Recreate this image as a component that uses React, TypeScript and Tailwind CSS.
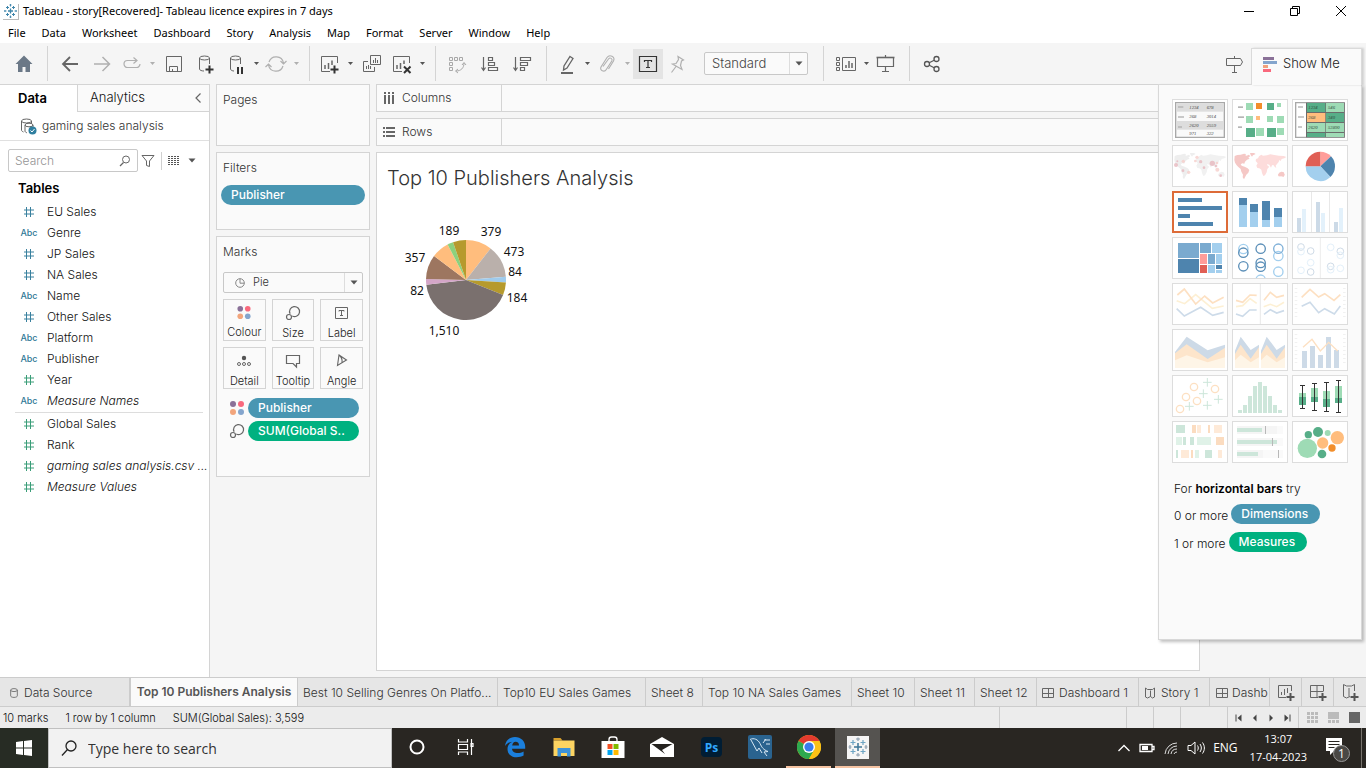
import type { ReactNode } from "react";

/* ---------- shared pieces ---------- */

function Icon({ children, size = 24, color = "#666666", box = "0 0 24 24" }: { children: ReactNode; size?: number; color?: string; box?: string }) {
  return (
    <svg width={size} height={size} viewBox={box} fill="none" stroke={color} aria-hidden="true" className="shrink-0">
      {children}
    </svg>
  );
}

function Tool({ label, wide, children }: { label: string; wide?: boolean; children: ReactNode }) {
  return (
    <button type="button" aria-label={label} className={wide ? "flex h-[30px] w-8 shrink-0 items-center justify-center" : "flex h-[30px] w-7 shrink-0 items-center justify-center"}>
      {children}
    </button>
  );
}

function Caret({ label, faint }: { label: string; faint?: boolean }) {
  return (
    <button type="button" aria-label={label} className="flex h-[30px] w-3 shrink-0 items-center justify-center">
      <svg width="5" height="3" viewBox="0 0 5 3" fill={faint ? "#b0b0b0" : "#555555"} aria-hidden="true">
        <path d="M0 0h5L2.5 3z" />
      </svg>
    </button>
  );
}

function Divider() {
  return <div className="h-[35px] w-px shrink-0 bg-[#d4d4d4]" />;
}

function DownArrow() {
  return (
    <svg width="8" height="5" viewBox="0 0 8 5" fill="#555555" aria-hidden="true">
      <path d="M0.5 0.5h7L4 4.5z" />
    </svg>
  );
}

const plus = <path d="M12.5 17.5h8M16.5 13.5v8" stroke="#333333" strokeWidth="2" />;

function TableauMark({ size }: { size: number }) {
  return (
    <svg width={size} height={size} viewBox="0 0 14 14" stroke="#3f86ab" fill="none" aria-hidden="true">
      <path d="M6.500 4.500v5M4 7h5" strokeWidth="1.300" />
      <path d="M3.500 2v3M2 3.500h3M9.500 2v3M8 3.500h3M3.500 9v3M2 10.500h3M9.500 9v3M8 10.500h3" />
      <path d="M6.500 0v2.500M5.500 1h2M6.500 11.500V14M5.500 13h2M1 6v2M0 7h2.500M12 6v2M10.500 7H13" strokeWidth="0.900" />
    </svg>
  );
}

/* ---------- window chrome ---------- */

const menus = ["File", "Data", "Worksheet", "Dashboard", "Story", "Analysis", "Map", "Format", "Server", "Window", "Help"];

function TitleBar() {
  return (
    <header className="shrink-0 bg-white font-['Noto_Sans','Open_Sans',sans-serif] text-[11px] font-normal text-black">
      <div className="flex h-[23px] items-center">
        <span className="ml-[3px] mr-1 flex h-4 w-4 items-center justify-center border-b border-r border-[#bbbbbb]">
          <TableauMark size={14} />
        </span>
        <h1 className="grow">Tableau - story[Recovered]- Tableau licence expires in 7 days</h1>
        <div className="mr-0.5 flex pb-0.5">
          <button type="button" aria-label="Minimise" className="flex h-5 w-[46px] items-center justify-center">
            <Icon size={12} box="0 0 12 12" color="#000000"><path d="M1 6.500h10" /></Icon>
          </button>
          <button type="button" aria-label="Restore" className="flex h-5 w-[46px] items-center justify-center">
            <Icon size={12} box="0 0 12 12" color="#000000"><path d="M1.500 3.500h7v7h-7zM3.500 3.500v-2h7v7h-2" /></Icon>
          </button>
          <button type="button" aria-label="Close" className="flex h-5 w-[46px] items-center justify-center">
            <Icon size={12} box="0 0 12 12" color="#000000"><path d="M1 1l10 10M11 1L1 11" /></Icon>
          </button>
        </div>
      </div>
      <nav className="flex h-5 items-center pt-px">
        {menus.map((m) => (
          <button key={m} type="button" className="px-2">{m}</button>
        ))}
      </nav>
    </header>
  );
}

function Toolbar() {
  return (
    <div className="flex h-[41px] shrink-0 items-center bg-[#f5f5f5]">
      <div className="flex w-[47px] justify-center">
        <Tool label="Start page">
          <Icon><path d="M12 3.500L3.500 12H6v8h4.500v-5h3v5H18v-8h2.500z" fill="#6b7887" stroke="none" /></Icon>
        </Tool>
      </div>
      <Divider />
      <div className="flex pl-1.5 pr-[7px]">
        <Tool label="Undo" wide><Icon><path d="M20 12H5M12 5l-7 7 7 7" strokeWidth="1.800" /></Icon></Tool>
        <Tool label="Redo" wide><Icon color="#b0b0b0"><path d="M4 12h15M12.500 5l7 7-7 7" strokeWidth="1.500" /></Icon></Tool>
        <Tool label="Replay"><Icon color="#b0b0b0"><path d="M17 8.500H7.500a3.500 3.500 0 0 0 0 7h9a3.500 3.500 0 0 0 3.500-3.500M13.500 5.500l3.500 3-3.500 3" strokeWidth="1.200" /></Icon></Tool>
        <Caret label="Replay options" faint />
        <Tool label="Save" wide><Icon><path d="M4.500 4.500h15v15h-15zM7.500 19.500v-5h8v5M10.500 17v2.500" /></Icon></Tool>
        <Tool label="New data source" wide>
          <Icon><ellipse cx="10.500" cy="6" rx="5" ry="2" /><path d="M5.500 6v11c0 1.200 2 2 4.500 2M15.500 6v6" /><path d="M11.500 17.500h8M15.500 13.500v8" stroke="#333333" strokeWidth="2" /></Icon>
        </Tool>
        <Tool label="Pause auto updates">
          <Icon><ellipse cx="11.500" cy="6" rx="5" ry="2" /><path d="M6.500 6v11c0 1.200 2 2 3.500 2M16.500 6v6" /><path d="M14 15v7M18 15v7" stroke="#333333" strokeWidth="2" /></Icon>
        </Tool>
        <Caret label="Auto update options" />
        <Tool label="Refresh"><Icon color="#b0b0b0"><path d="M5 10a7.500 7.500 0 0 1 14.500 1M19 14a7.500 7.500 0 0 1-14.500-1M16.500 9l3 3 3-3M1.500 15l3-3 3 3" strokeWidth="1.200" /></Icon></Tool>
        <Caret label="Refresh options" faint />
      </div>
      <Divider />
      <div className="flex pl-1.5 pr-[7px]">
        <Tool label="New worksheet"><Icon><path d="M19.500 11V4.500h-16v15H12" /><path d="M7 17v-4M10.500 17v-6M14 13V8.500" strokeWidth="1.500" />{plus}</Icon></Tool>
        <Caret label="New worksheet options" />
        <Tool label="Duplicate" wide><Icon><path d="M10.500 3.500h10v9h-10zM8 9.500H3.500v10h11V15" /><path d="M13.500 11V8M15.500 11V6M17.500 11V8M6.500 17v-3M8.500 17v-4M10.500 17v-3" /></Icon></Tool>
        <Tool label="Clear sheet"><Icon><path d="M19.500 11V4.500h-16v15H12" /><path d="M7 17v-4M10.500 17v-6M14 12V8.500" strokeWidth="1.500" /><path d="M14 14.500l6.500 6.500M20.500 14.500L14 21" stroke="#333333" strokeWidth="2" /></Icon></Tool>
        <Caret label="Clear sheet options" />
      </div>
      <Divider />
      <div className="flex pl-[5px] pr-[9px]">
        <Tool label="Swap rows and columns" wide>
          <Icon color="#a8a8a8"><path d="M4.500 5.500h3v3h-3zM9.500 5.500h3v3h-3zM14.500 5.500h3v3h-3zM4.500 10.500h3v3h-3zM4.500 15.500h3v3h-3z" /><path d="M19 11c0 5-3 8-8 8M17 13l2-2.500 2 2.500M13 17l-2.500 2 2.500 2" /></Icon>
        </Tool>
        <Tool label="Sort ascending" wide>
          <Icon><path d="M6.500 5v13M4.500 15.500l2 3 2-3M11.500 5.500h4v3h-4zM11.500 10.500h6v3h-6zM11.500 15.500h9v3h-9z" strokeWidth="1.200" /></Icon>
        </Tool>
        <Tool label="Sort descending" wide>
          <Icon><path d="M6.500 5v13M4.500 15.500l2 3 2-3M11.500 5.500h10v3h-10zM11.500 10.500h7v3h-7zM11.500 15.500h4v3h-4z" strokeWidth="1.200" /></Icon>
        </Tool>
      </div>
      <Divider />
      <div className="flex pl-1.5">
        <Tool label="Highlight"><Icon><path d="M15 4.500l3 2-6 9.500-3.500 2 .5-4z" strokeWidth="1.300" /><path d="M6 21h12" strokeWidth="2" /></Icon></Tool>
        <Caret label="Highlight options" />
        <Tool label="Group members"><Icon color="#b0b0b0"><path d="M8 14.500L13.500 7c1.500-2 4.500-.3 3.300 2l-5.500 8.500c-2 3.300-7 .8-5.300-2.500l6-9.500c2.500-3.500 8.500-1 6.500 3.500l-5 8" strokeWidth="1.100" /></Icon></Tool>
        <Caret label="Group options" faint />
        <button type="button" aria-label="Show mark labels" aria-pressed="true" className="flex h-[30px] w-[30px] items-center justify-center bg-[#e4e4e4]">
          <Icon color="#333333"><path d="M3.500 4.500h17v15h-17z" strokeWidth="1.200" /><path d="M8.500 10V8.500h7V10M12 8.500v7M10 15.500h4" strokeWidth="1.200" /></Icon>
        </button>
        <Tool label="Fix axes"><Icon color="#b0b0b0"><path d="M13 4.500l5.500 3.500-2 1-1 4.500 1.500 4-9.500-5.500 3.500-.5 2.500-4zM11 14.500l-4.500 6" strokeWidth="1.200" /></Icon></Tool>
      </div>
      <div className="relative ml-[13px] mr-[15px] shrink-0">
        <select aria-label="Fit" className="block h-[23px] w-[104px] appearance-none rounded-[2px] border border-[#c8c8c8] bg-[#fafafa] pl-[7px] text-[13px] text-[#444444]">
          <option>Standard</option>
          <option>Entire View</option>
        </select>
        <span className="pointer-events-none absolute inset-y-px right-px flex w-[18px] items-center justify-center border-l border-[#dddddd]"><DownArrow /></span>
      </div>
      <Divider />
      <div className="flex pl-2 pr-[9px]">
        <Tool label="Show or hide cards"><Icon><path d="M2.500 5.500h3v3h-3zM2.500 10.500h3v3h-3zM2.500 15.500h3v3h-3zM8.500 5.500h13v13h-13z" /><path d="M12 16v-3M15 16V9M18 16v-5" strokeWidth="1.500" /></Icon></Tool>
        <Caret label="Card options" />
        <Tool label="Presentation mode"><Icon><path d="M3.500 6v8.500h16V6M11.500 14.500v5M8 19.500h7M11.500 3v2" strokeWidth="1.200" /><path d="M2.500 5.500h18" strokeWidth="1.600" /></Icon></Tool>
      </div>
      <Divider />
      <div className="flex pl-2">
        <Tool label="Share"><Icon color="#555555"><circle cx="7" cy="12" r="2.500" strokeWidth="1.300" /><circle cx="16.500" cy="7" r="2.500" strokeWidth="1.300" /><circle cx="16.500" cy="17" r="2.500" strokeWidth="1.300" /><path d="M9.200 10.800l5-2.600M9.200 13.200l5 2.600" strokeWidth="1.200" /></Icon></Tool>
      </div>
      <div className="grow" />
      <Tool label="Show me guide" wide><Icon><path d="M4.500 6.500h14l2 3.500-2 3.500h-14zM12.500 4v2.500M12.500 13.500v7M10 20.500h5" /></Icon></Tool>
      <button type="button" aria-expanded="true" className="relative z-20 -mb-px ml-[1px] mr-1 flex h-[37px] w-[111px] shrink-0 items-center gap-1.5 self-end border-l border-r border-t border-[#dadada] bg-[#fafafa] pb-1.5 pl-[11px] text-[13px] text-[#222222] shadow-[2px_0_2px_rgba(0,0,0,0.15)]">
        <svg width="14" height="15" viewBox="0 0 14 15" aria-hidden="true">
          <path d="M0 0h11v3H0z" fill="#8a7198" /><path d="M0 4h14v3H0z" fill="#84a5cd" /><path d="M0 8h5v3H0z" fill="#f2a17c" /><path d="M0 12h8v3H0z" fill="#f9697d" />
        </svg>
        Show Me
      </button>
    </div>
  );
}

/* ---------- data pane ---------- */

type Field = { name: string; kind: "num" | "abc"; tone: "dim" | "mea"; calc?: boolean };

const dimensions: Field[] = [
  { name: "EU Sales", kind: "num", tone: "dim" },
  { name: "Genre", kind: "abc", tone: "dim" },
  { name: "JP Sales", kind: "num", tone: "dim" },
  { name: "NA Sales", kind: "num", tone: "dim" },
  { name: "Name", kind: "abc", tone: "dim" },
  { name: "Other Sales", kind: "num", tone: "dim" },
  { name: "Platform", kind: "abc", tone: "dim" },
  { name: "Publisher", kind: "abc", tone: "dim" },
  { name: "Year", kind: "num", tone: "mea" },
  { name: "Measure Names", kind: "abc", tone: "dim", calc: true },
];

const measures: Field[] = [
  { name: "Global Sales", kind: "num", tone: "mea" },
  { name: "Rank", kind: "num", tone: "mea" },
  { name: "gaming sales analysis.csv ...", kind: "num", tone: "mea", calc: true },
  { name: "Measure Values", kind: "num", tone: "mea", calc: true },
];

function FieldRow({ field }: { field: Field }) {
  return (
    <li className="flex h-[21px] items-center">
      <span className="flex w-[18px] shrink-0 justify-center">
        {field.kind === "num" ? (
          <svg width="12" height="12" viewBox="0 0 12 12" fill="none" stroke={field.tone === "dim" ? "#39809e" : "#3a9d78"} aria-hidden="true">
            <path d="M3.500 1v10M7.500 1v10M1 4h10M1 8h10" />
          </svg>
        ) : (
          <span className="pt-px text-[9px] font-medium text-[#2f7896]">Abc</span>
        )}
      </span>
      <span className={field.calc ? "ml-[9px] whitespace-nowrap italic" : "ml-[9px] whitespace-nowrap"}>{field.name}</span>
    </li>
  );
}

function DataPane() {
  return (
    <aside className="flex w-[210px] shrink-0 flex-col border-r border-t border-[#d4d4d4] bg-white text-[12px] text-[#111111]">
      <div className="flex h-[27px] shrink-0 text-[13px]">
        <button type="button" className="w-[77px] pr-3 text-center font-semibold text-black">Data</button>
        <button type="button" className="grow border-b border-l border-[#d4d4d4] bg-[#fafafa] pl-3 text-left">Analytics</button>
        <button type="button" aria-label="Collapse pane" className="flex w-[22px] items-center justify-center border-b border-[#d4d4d4] bg-[#fafafa]">
          <Icon size={12} box="0 0 12 12"><path d="M8.500 1.500L4 6l4.500 4.500" strokeWidth="1.200" /></Icon>
        </button>
      </div>
      <div className="flex h-[29px] shrink-0 items-center border-b border-[#e0e0e0] pl-5 text-[#333333]">
        <Icon size={17} box="0 0 17 17">
          <ellipse cx="6.500" cy="3" rx="5" ry="2" /><path d="M1.500 3v9c0 1 .8 1.500 2 2M11.500 3v2" />
          <ellipse cx="9" cy="7" rx="4" ry="1.800" /><path d="M5 7v6c0 1 1 1.500 2 1.800M13 7v2" />
          <circle cx="12.500" cy="12.500" r="4" fill="#2f7fa0" stroke="none" /><path d="M10.500 12.500l1.500 1.500 2.500-3" stroke="#ffffff" />
        </Icon>
        <span className="ml-[5px]">gaming sales analysis</span>
      </div>
      <div className="mt-2 flex items-center pl-2">
        <div className="flex h-[23px] w-[130px] items-center rounded-[2px] border border-[#c8c8c8] pl-1.5 pr-1.5">
          <input aria-label="Search fields" placeholder="Search" className="w-full min-w-0 bg-transparent placeholder:text-[#949494] focus:outline-none" />
          <Icon size={12} box="0 0 12 12"><circle cx="7" cy="4.500" r="3.500" /><path d="M4.500 7.500L1 11" strokeWidth="1.200" /></Icon>
        </div>
        <button type="button" aria-label="Filter fields" className="ml-[3px] flex w-[14px] justify-center">
          <Icon size={14} box="0 0 14 14"><path d="M1 1.500h12L8.500 7v5.500l-3-1V7z" /></Icon>
        </button>
        <div className="ml-1.5 h-[18px] w-px bg-[#d0d0d0]" />
        <button type="button" aria-label="View as list" className="ml-1.5 flex items-center gap-2">
          <Icon size={12} box="0 0 12 12"><path d="M0 1.500h12M0 3.500h12M0 5.500h12M0 7.500h12M0 9.500h12" stroke="#555555" strokeDasharray="2 1" /></Icon>
          <DownArrow />
        </button>
      </div>
      <h2 className="ml-[18px] mt-1.5 h-5 text-[13px] font-semibold leading-5 text-black">Tables</h2>
      <ul className="mt-[3px] pl-5">
        {dimensions.map((f) => <FieldRow key={f.name} field={f} />)}
      </ul>
      <div className="ml-[15px] mr-1.5 mt-px h-px shrink-0 bg-[#dddddd]" />
      <ul className="pl-5">
        {measures.map((f) => <FieldRow key={f.name} field={f} />)}
      </ul>
    </aside>
  );
}

/* ---------- cards ---------- */

function ColourDots() {
  return (
    <svg width="16" height="16" viewBox="0 0 16 16" aria-hidden="true">
      <circle cx="4" cy="4" r="3" fill="#8a7198" /><circle cx="12" cy="4" r="3" fill="#f9697d" />
      <circle cx="4" cy="12" r="3" fill="#f2a57c" /><circle cx="12" cy="12" r="3" fill="#84a5cd" />
    </svg>
  );
}

function SizeGlyph() {
  return (
    <Icon size={16} box="0 0 16 16">
      <path d="M5.100 8.800A5 5 0 1 1 7.300 11" strokeWidth="1.200" /><circle cx="4" cy="12" r="2.500" strokeWidth="1.200" />
    </Icon>
  );
}

const markButtons: { label: string; icon: ReactNode }[] = [
  { label: "Colour", icon: <ColourDots /> },
  { label: "Size", icon: <SizeGlyph /> },
  { label: "Label", icon: <Icon size={16} box="0 0 16 16"><path d="M1.500 2.500h12v11h-12z" /><path d="M5 6.500V5.500h5v1M7.500 5.500v5M6 10.500h3" /></Icon> },
  { label: "Detail", icon: <Icon size={16} box="0 0 16 16"><circle cx="8" cy="5" r="2.200" fill="#555555" stroke="none" /><circle cx="3" cy="11" r="1.500" /><circle cx="8" cy="11" r="1.500" /><circle cx="13" cy="11" r="1.500" /></Icon> },
  { label: "Tooltip", icon: <Icon size={16} box="0 0 16 16"><path d="M1.500 2.500h13v8h-3v3.500l-3.500-3.500H1.500z" strokeWidth="1.200" /></Icon> },
  { label: "Angle", icon: <Icon size={16} box="0 0 16 16"><path d="M5 2l7.500 5L3.500 12.500zM5 2c2.500 2 3.500 4.500 3 7.500" strokeWidth="1.100" /></Icon> },
];

function Pill({ children, green }: { children: ReactNode; green?: boolean }) {
  return (
    <div className={green ? "h-5 grow rounded-full bg-[#00b180] pl-[10px] text-[12px] font-medium leading-5 text-white" : "h-5 grow rounded-full bg-[#4996b2] pl-[10px] text-[12px] font-medium leading-5 text-white"}>
      {children}
    </div>
  );
}

function Cards() {
  return (
    <div className="ml-1.5 flex w-[154px] shrink-0 flex-col gap-1.5 text-[12px] text-[#333333]">
      <section className="h-[62px] shrink-0 border border-[#d4d4d4] bg-[#fafafa] px-1.5 pt-1.5">
        <h2 className="leading-[18px]">Pages</h2>
      </section>
      <section className="h-[78px] shrink-0 border border-[#d4d4d4] bg-[#fafafa] px-1.5 pt-1.5">
        <h2 className="leading-[18px]">Filters</h2>
        <div className="-mx-0.5 mt-2 flex"><Pill>Publisher</Pill></div>
      </section>
      <section className="h-[241px] shrink-0 border border-[#d4d4d4] bg-[#fafafa] px-1.5 pt-1.5">
        <h2 className="leading-[18px]">Marks</h2>
        <div className="relative mt-[11px]">
          <select aria-label="Mark type" className="block h-[21px] w-full appearance-none rounded-[2px] border border-[#c8c8c8] bg-[#fafafa] pl-[29px] text-[11px]">
            <option>Pie</option>
            <option>Bar</option>
          </select>
          <span className="pointer-events-none absolute inset-y-0 left-3 flex items-center">
            <Icon size={10} box="0 0 10 10" color="#888888"><circle cx="5" cy="5" r="4.300" /><path d="M5 .7v4.500h4.300" /></Icon>
          </span>
          <span className="pointer-events-none absolute inset-y-px right-px flex w-[18px] items-center justify-center border-l border-[#dddddd]"><DownArrow /></span>
        </div>
        <div className="mt-1.5 grid grid-cols-3 gap-1.5">
          {markButtons.map((b) => (
            <button key={b.label} type="button" className="flex h-[42px] flex-col items-center border border-[#d4d4d4] bg-[#fafafa] pt-[5px] text-[11px] leading-4 text-[#222222]">
              {b.icon}
              <span className="mt-1">{b.label}</span>
            </button>
          ))}
        </div>
        <div className="mt-[9px] flex items-center gap-[3px] pl-1.5 pr-1"><ColourDots /><Pill>Publisher</Pill></div>
        <div className="mt-[3px] flex items-center gap-[3px] pl-1.5 pr-1"><SizeGlyph /><Pill green>SUM(Global S..</Pill></div>
      </section>
    </div>
  );
}

/* ---------- worksheet ---------- */

const slices = [
  { v: 379, c: "#ffbd7d" }, { v: 473, c: "#bab0ab" }, { v: 84, c: "#9fcbec" }, { v: 184, c: "#b69a2d" }, { v: 1510, c: "#7a706e" },
  { v: 82, c: "#d4a6c8" }, { v: 357, c: "#9d7660" }, { v: 256, c: "#ffbd7d" }, { v: 85, c: "#8cd17d" }, { v: 189, c: "#b69a2d" },
];

const pieLabels = [
  { t: "189", x: 449, y: 235 }, { t: "379", x: 491, y: 236 }, { t: "473", x: 514, y: 256 }, { t: "84", x: 515, y: 276 },
  { t: "184", x: 517, y: 302 }, { t: "357", x: 415, y: 262 }, { t: "82", x: 417, y: 295 }, { t: "1,510", x: 444, y: 335 },
];

function wedge(cx: number, cy: number, r: number, from: number, to: number) {
  const p = (a: number) => `${(cx + r * Math.sin(a * 2 * Math.PI)).toFixed(2)} ${(cy - r * Math.cos(a * 2 * Math.PI)).toFixed(2)}`;
  return `M${cx} ${cy}L${p(from)}A${r} ${r} 0 ${to - from > 0.5 ? 1 : 0} 1 ${p(to)}Z`;
}

function PieChart() {
  const total = slices.reduce((s, d) => s + d.v, 0);
  let acc = 0;
  return (
    <svg width="160" height="140" viewBox="386 210 160 140" role="img" aria-label="Global sales by publisher" className="mt-[18px]">
      {slices.map((s, i) => {
        const from = acc / total;
        acc += s.v;
        return <path key={i} d={wedge(466, 280, 40, from, acc / total)} fill={s.c} />;
      })}
      {pieLabels.map((l) => (
        <text key={l.t} x={l.x} y={l.y} textAnchor="middle" className="fill-[#111111] font-['Noto_Sans','Open_Sans',sans-serif] text-[12px] font-normal">{l.t}</text>
      ))}
    </svg>
  );
}

function Shelf({ name, icon }: { name: string; icon: ReactNode }) {
  return (
    <div className="flex h-7 shrink-0 border border-[#d4d4d4] bg-[#fafafa] text-[12px] text-[#333333]">
      <div className="flex w-[125px] items-center gap-[7px] border-r border-[#d4d4d4] pl-1.5">
        {icon}
        {name}
      </div>
    </div>
  );
}

function Sheet() {
  return (
    <main className="ml-1.5 mr-[166px] flex min-w-0 grow flex-col gap-1.5 pb-1.5">
      <Shelf name="Columns" icon={<svg width="12" height="12" viewBox="0 0 12 12" fill="#666666" aria-hidden="true"><path d="M1 0h2v2H1zM5 0h2v2H5zM9 0h2v2H9zM1 3h2v9H1zM5 3h2v9H5zM9 3h2v9H9z" /></svg>} />
      <Shelf name="Rows" icon={<svg width="12" height="12" viewBox="0 0 12 12" fill="#666666" aria-hidden="true"><path d="M0 1h2v2H0zM0 5h2v2H0zM0 9h2v2H0zM3 1h9v2H3zM3 5h9v2H3zM3 9h9v2H3z" /></svg>} />
      <section className="grow border border-[#d4d4d4] bg-white pl-[9px] pt-[11px]">
        <h2 className="h-7 pl-px text-[20px] leading-7 text-[#333333]">Top 10 Publishers Analysis</h2>
        <PieChart />
      </section>
    </main>
  );
}

/* ---------- Show Me ---------- */

function Rects({ list, fill }: { list: number[][]; fill: string }) {
  return <g fill={fill}>{list.map(([x, y, w, h], i) => <rect key={i} x={x} y={y} width={w} height={h} />)}</g>;
}

function Rings({ list, r, stroke, width = 3 }: { list: number[][]; r: number; stroke: string; width?: number }) {
  return <g fill="none" stroke={stroke} strokeWidth={width}>{list.map(([x, y], i) => <circle key={i} cx={x} cy={y} r={r} />)}</g>;
}

function Balls({ list, fill }: { list: number[][]; fill: string }) {
  return <g fill={fill}>{list.map(([x, y, r], i) => <circle key={i} cx={x} cy={y} r={r} />)}</g>;
}

const landAmerica = "M74 228l8-3 10-1 10-3 6 1-2 4 4 1 6-3 5 4-6 5 4 3-8 3-6 6-2 6-6-1-5 3 3 4 4 2 5 1 9 5 5 5-3 8-6 6-4 8-3 6-4-6 1-8-5-9-2-8-7-6-5-5-5-8-2-8zM120 219l12 0 5 3-8 4-3 4-4-5z";
const landRest = "M137 243l1-6 6-2 3-6 7-5 5 3 12-1 10-3 12 2 14 2 14 1 8 3-6 4-8 2-3 6-4-3-2 6-5 6-4 5 2 6-4-1-5-7-4 1-3 7-5-9-7-2 2 5 5 3-6 7-2 10-5 9-5 2-4-9-2-10-6-4-6-1-3-7 4-7zM204 284l4-6 7-3 6 2 3 7-3 6-6-1-9 0z";

const numeric = "font-['Liberation_Serif',serif] text-[14px] font-normal italic";

type Thumb = { name: string; box: string; art: ReactNode; on?: boolean };

const thumbs: Thumb[] = [
  { name: "Text table", box: "66 57 168 126", art: <>
    <path d="M77 68h146v104H77z" fill="#f9f9f9" stroke="#a8a8a8" strokeWidth="4" /><Rects fill="#dddddd" list={[[79, 70, 142, 25], [79, 123, 142, 26]]} /><Rects fill="#b0b0b0" list={[[84, 79, 16, 4], [84, 109, 18, 4], [84, 139, 12, 4]]} />
    <g fill="#444444" className={numeric}><text x="118" y="87">1234</text><text x="170" y="87">678</text><text x="118" y="115">368</text><text x="170" y="115">3014</text><text x="118" y="141">2620</text><text x="170" y="141">2559</text><text x="118" y="165">971</text><text x="170" y="165">322</text></g></> },
  { name: "Heat map", box: "246 57 168 126", art: <>
    <Rects fill="#b5b5b5" list={[[264, 79, 15, 5], [264, 109, 18, 5], [264, 139, 12, 5]]} /><Rects fill="#9edbb5" list={[[288, 69, 21, 21], [381, 69, 12, 12], [288, 108, 21, 21], [351, 108, 18, 18], [381, 108, 21, 21], [318, 144, 24, 24], [381, 144, 21, 21]]} />
    <Rects fill="#57ae88" list={[[351, 69, 21, 21], [288, 144, 27, 27], [351, 144, 27, 27]]} /><Rects fill="#f28e2b" list={[[318, 69, 18, 18]]} /><Rects fill="#ffbd7d" list={[[318, 108, 12, 12]]} /></> },
  { name: "Highlight table", box: "426 57 168 126", art: <>
    <path d="M437 68h146v104H437z" fill="#ffffff" stroke="#a8a8a8" strokeWidth="4" /><Rects fill="#6b6b6b" list={[[468, 68, 116, 104]]} /><Rects fill="#57ae88" list={[[471, 69, 55, 27], [528, 99, 54, 27], [471, 159, 55, 12]]} /><Rects fill="#9edbb5" list={[[528, 69, 54, 27], [471, 129, 55, 27], [528, 129, 54, 27], [528, 159, 54, 12]]} /><Rects fill="#ffbd7d" list={[[471, 99, 55, 27]]} /><Rects fill="#b0b0b0" list={[[444, 79, 15, 4], [444, 109, 18, 4], [444, 139, 12, 4]]} />
    <g fill="#2f4a3b" className={numeric}><text x="475" y="87">1234</text><text x="534" y="87">546</text><text x="475" y="118">368</text><text x="534" y="118">340</text><text x="475" y="147">2620</text><text x="534" y="147">53890</text></g></> },
  { name: "Symbol map", box: "66 195 168 126", art: <><path d={landAmerica} fill="#eeeeee" /><path d={landRest} fill="#f1f1f1" /><g opacity="0.8"><Balls fill="#e8b8bf" list={[[78, 255, 6], [187, 250, 8], [152, 245, 5], [99, 272, 4], [162, 263, 4], [212, 287, 4], [82, 244, 3], [198, 258, 4]]} /><Balls fill="#f7cfcb" list={[[100, 244, 5], [141, 232, 5], [136, 243, 4], [116, 277, 5], [202, 269, 6], [201, 249, 4]]} /></g></> },
  { name: "Filled map", box: "246 195 168 126", art: <g transform="translate(180 0)"><path d={landAmerica} fill="#f5c8c6" /><path d={landRest} fill="#fddcdb" /><path d="M204 284l4-6 7-3 6 2 3 7-3 6-6-1-9 0z" fill="#f5c8c6" /></g> },
  { name: "Pie chart", box: "426 195 168 126", art: <><path d={wedge(511, 259, 44, 0, 0.13)} fill="#ff9d9a" /><path d={wedge(511, 259, 44, 0.13, 0.38)} fill="#4e84ae" /><path d={wedge(511, 259, 44, 0.38, 0.75)} fill="#a3cfee" /><path d={wedge(511, 259, 44, 0.75, 1)} fill="#e05f55" /></> },
  { name: "Horizontal bars", box: "66 333 168 126", on: true, art: <Rects fill="#4e84ae" list={[[84, 354, 72, 12], [84, 378, 132, 12], [84, 402, 36, 12], [84, 426, 105, 12]]} /> },
  { name: "Stacked bars", box: "246 333 168 126", art: <><Rects fill="#4e84ae" list={[[267, 354, 24, 21], [300, 372, 24, 24], [336, 363, 24, 57], [372, 384, 24, 27]]} /><Rects fill="#a3cfee" list={[[267, 375, 24, 66], [300, 396, 24, 45], [336, 420, 24, 21], [372, 411, 24, 30]]} /></> },
  { name: "Side-by-side bars", box: "426 333 168 126", art: <><Rects fill="#e8e8e8" list={[[483, 336, 3, 120], [537, 336, 3, 120]]} /><Rects fill="#ccdae7" list={[[441, 414, 12, 42], [498, 366, 12, 90], [552, 426, 12, 30]]} /><Rects fill="#e3f1fb" list={[[456, 387, 12, 69], [513, 399, 12, 57], [567, 384, 12, 72]]} /></> },
  { name: "Treemap", box: "66 471 168 126", art: <>
    <Rects fill="#7aaacf" list={[[84, 489, 63, 45], [150, 489, 33, 30], [174, 522, 21, 30]]} /><Rects fill="#4e84ae" list={[[84, 537, 63, 42], [198, 555, 18, 12]]} />
    <Rects fill="#a3cfee" list={[[186, 489, 30, 30], [198, 522, 18, 30], [174, 555, 21, 24], [198, 570, 18, 9]]} /><Rects fill="#ff9d9a" list={[[150, 522, 21, 30]]} /><Rects fill="#e05f55" list={[[150, 555, 21, 24]]} /></> },
  { name: "Circle views", box: "246 471 168 126", art: <><Rings r={14} width={4} stroke="#a3cfee" list={[[280, 507], [385, 528], [385, 575], [332, 599]]} /><Rings r={14} width={4} stroke="#5b8fb8" list={[[280, 518], [280, 559], [332, 506], [332, 549], [332, 560]]} /><Rings r={14} width={4} stroke="#7fb0d8" list={[[385, 506]]} /></> },
  { name: "Side-by-side circles", box: "426 471 168 126", art: <><path d="M511 474v120" stroke="#ececec" strokeWidth="3" /><Rings r={10} stroke="#cfdbe7" list={[[453, 501], [482, 513], [482, 576], [571, 514], [542, 559]]} /><Rings r={10} stroke="#e3f0fa" list={[[453, 515], [482, 548], [453, 571], [542, 502], [571, 526], [571, 565], [542, 569]]} /></> },
  { name: "Continuous lines", box: "66 9 168 126", art: <g fill="none" strokeWidth="5"><path d="M80 62l24 9 33-27 50 41 34-7" stroke="#fdf0d4" /><path d="M82 45l21-18 34 45 27-24 24 21 33-17" stroke="#fde0c2" /><path d="M80 86l23 22 49-26 36 24 33-9" stroke="#cddbe9" /></g> },
  { name: "Discrete lines", box: "246 9 168 126", art: <><path d="M331 12v120" stroke="#e8e8e8" strokeWidth="3" /><g fill="none" strokeWidth="5"><path d="M258 80l20-3 22-21 20 14M341 80l20-7 19 7 22-13" stroke="#fdf0d4" /><path d="M258 61l20 6 22-22 20 1M342 61l19-24 19 15 22-6" stroke="#fde0c2" /><path d="M258 102l20 7 21-19h21M342 103l19-14 19 10 22-7" stroke="#cddbe9" /></g></> },
  { name: "Dual lines", box: "426 9 168 126", art: <><path d="M438 25v92M583 25v92" stroke="#ededed" strokeWidth="8" strokeDasharray="2 10" /><g fill="none" strokeWidth="5"><path d="M455 52l25-24 26 23 18-10 28 20 19-17" stroke="#fde0c2" /><path d="M455 79l25-12 26 31 18-12 29 16 18-24" stroke="#cddbe9" /></g></> },
  { name: "Continuous area", box: "66 147 168 126", art: <><path d="M75 216l35-46 63 41 52-17v70H75z" fill="#cddae7" /><path d="M75 220l35-27 63 44 52-34v61H75z" fill="#fde5cb" /><path d="M75 241l35-15 63 21 52-15v32H75z" fill="#fef5e7" /></> },
  { name: "Discrete area", box: "246 147 168 126", art: <>{[0, 78].map((d) => <g key={d} transform={`translate(${d} 0)`}><path d="M255 212l17-42 30 40 25-16v70h-72z" fill="#cddae7" /><path d="M255 222l17-28 30 42 25-34v62h-72z" fill="#fde5cb" /><path d="M255 241l17-17 30 23 25-15v32h-72z" fill="#fef5e7" /></g>)}</> },
  { name: "Dual combination", box: "426 147 168 126", art: <><path d="M438 163v92M583 163v92" stroke="#ededed" strokeWidth="8" strokeDasharray="2 10" /><Rects fill="#cddae7" list={[[456, 213, 15, 51], [480, 198, 15, 66], [504, 225, 15, 39], [528, 171, 15, 93], [552, 210, 15, 54]]} /><path d="M459 202l27-24 25 35 25-26 27 26" fill="none" stroke="#fde0c2" strokeWidth="4" /></> },
  { name: "Scatter plot", box: "66 285 168 126", art: <><Rings r={11} width={4} stroke="#fde0c2" list={[[132, 321], [195, 327], [108, 351], [141, 363], [90, 387]]} /><g stroke="#cde6da" strokeWidth="3">{[[172, 307], [160, 341], [205, 358], [118, 379], [172, 376]].map(([x, y]) => <path key={x * 1000 + y} d={`M${x - 13} ${y}h26M${x} ${y - 13}v26`} />)}</g></> },
  { name: "Histogram", box: "246 285 168 126", art: <Rects fill="#cde6da" list={[[264, 390, 12, 9], [279, 375, 12, 24], [294, 348, 12, 51], [309, 318, 12, 81], [324, 306, 12, 93], [339, 318, 12, 81], [354, 348, 12, 51], [369, 375, 12, 24], [384, 390, 12, 9]]} /> },
  { name: "Box-and-whisker plot", box: "426 285 168 126", art: <><Rects fill="#9edbb5" list={[[447, 339, 21, 12], [483, 324, 21, 27], [519, 333, 21, 24], [555, 318, 21, 36]]} /><Rects fill="#57ae88" list={[[447, 351, 21, 24], [483, 351, 21, 15], [519, 357, 21, 24], [555, 354, 21, 15]]} /><path d="M457.500 316v69M450 316.500h15M450 385.500h15M493.500 310v81M486 310.500h15M486 391.500h15M529.500 307v87M522 307.500h15M522 394.500h15M565.500 301v96M558 301.500h15M558 397.500h15" stroke="#333333" strokeWidth="3" /></> },
  { name: "Gantt chart", box: "66 423 168 126", art: <><Rects fill="#cde6da" list={[[78, 435, 27, 24], [99, 471, 9, 24], [120, 471, 12, 24], [78, 510, 6, 24], [165, 510, 21, 24]]} /><Rects fill="#e0f2e8" list={[[78, 471, 18, 24], [141, 471, 42, 24], [135, 510, 12, 24]]} /><Rects fill="#fbdcc0" list={[[126, 435, 12, 24], [174, 435, 6, 24], [198, 471, 24, 24], [123, 510, 6, 24]]} /><Rects fill="#feead8" list={[[141, 435, 12, 24], [192, 435, 24, 24], [93, 510, 24, 24], [204, 510, 12, 24]]} /></> },
  { name: "Bullet graph", box: "246 423 168 126", art: <><Rects fill="#f5f5f5" list={[[261, 438, 120, 24], [261, 474, 105, 24], [261, 510, 78, 24]]} /><Rects fill="#fafafa" list={[[381, 438, 18, 24], [366, 474, 33, 24], [339, 510, 60, 24]]} /><Rects fill="#cde6da" list={[[261, 444, 75, 12], [261, 480, 120, 12], [261, 516, 63, 12]]} /><Rects fill="#b8b8b8" list={[[345, 438, 3, 24], [366, 474, 3, 24], [384, 510, 3, 24]]} /></> },
  { name: "Packed bubbles", box: "426 423 168 126", art: <><Balls fill="#9edbb5" list={[[472, 505, 29], [533, 459, 9]]} /><Balls fill="#57ae88" list={[[475, 464, 11], [504, 456, 15], [516, 522, 13]]} /><Balls fill="#ffbd7d" list={[[518, 489, 17], [562, 473, 20]]} /><Balls fill="#f28e2b" list={[[546, 504, 11]]} /></> },
];

function ShowMe() {
  return (
    <aside className="absolute right-1 top-0 z-10 h-[556px] w-[204px] border border-[#d8d8d8] bg-[#fafafa] pl-[13px] pt-[14px] text-[12px] text-[#111111] shadow-[2px_2px_3px_rgba(0,0,0,0.25)]">
      <div className="grid w-44 grid-cols-3 gap-1">
        {thumbs.map((t) => (
          <button key={t.name} type="button" aria-label={t.name} className={t.on ? "h-[42px] overflow-hidden bg-white outline-2 -outline-offset-2 outline-[#dd6b38]" : "h-[42px] overflow-hidden bg-white outline-1 -outline-offset-1 outline-[#dddddd]"}>
            <svg width="56" height="42" viewBox={t.box} className="block" aria-hidden="true">{t.art}</svg>
          </button>
        ))}
      </div>
      <div className="pl-0.5">
        <p className="mt-4 leading-5">For <b className="font-semibold text-black">horizontal bars</b> try</p>
        <div className="mt-[5px] flex h-5 items-center gap-[3px]">
          <span className="pt-1">0 or more</span>
          <span className="h-5 rounded-full bg-[#4996b2] pl-[10px] pr-3 font-medium leading-5 text-white">Dimensions</span>
        </div>
        <div className="mt-2 flex h-5 items-center gap-[3px]">
          <span className="pt-1">1 or more</span>
          <span className="h-5 rounded-full bg-[#00b180] pl-[10px] pr-3 font-medium leading-5 text-white">Measures</span>
        </div>
      </div>
    </aside>
  );
}

/* ---------- tabs and status ---------- */

const dashIcon = <Icon size={12} box="0 0 12 12"><path d="M.5 1.500h11v9H.5zM6.500 1.500v9M.5 6.500h11" /></Icon>;
const storyIcon = <Icon size={12} box="0 0 12 12"><path d="M1.500 1l2 1.500h5l2-1.500v9l-2 1-2-1.500-3 1.500-2-1zM6.500 3.500v6" /></Icon>;

const tabs: { name: string; w: string; icon?: ReactNode }[] = [
  { name: "Best 10 Selling Genres On Platfo...", w: "w-[200px]" },
  { name: "Top10 EU Sales Games", w: "w-[148px]" },
  { name: "Sheet 8", w: "w-[57px]" },
  { name: "Top 10 NA Sales Games", w: "w-[149px]" },
  { name: "Sheet 10", w: "w-[63px]" },
  { name: "Sheet 11", w: "w-[60px]" },
  { name: "Sheet 12", w: "w-[62px]" },
  { name: "Dashboard 1", w: "w-[102px]", icon: dashIcon },
  { name: "Story 1", w: "w-[71px]", icon: storyIcon },
];

function SheetTabs() {
  return (
    <nav className="flex h-[30px] shrink-0 border-b border-t border-[#cccccc] bg-[#e6e6e6] text-[12px] text-[#333333]">
      <button type="button" className="flex w-[131px] shrink-0 items-center gap-[5px] border-r-2 border-[#cccccc] pl-[9px] pt-px">
        <Icon size={10} box="0 0 10 12"><ellipse cx="5" cy="2.500" rx="4" ry="1.800" /><path d="M1 2.500v7c0 1 1.800 1.800 4 1.800s4-.8 4-1.800v-7" /></Icon>
        Data Source
      </button>
      <button type="button" aria-current="page" className="w-[167px] shrink-0 whitespace-nowrap border-r border-[#cccccc] bg-[#fafafa] font-semibold text-[#555555]">Top 10 Publishers Analysis</button>
      {tabs.map((t) => (
        <button key={t.name} type="button" className={`flex shrink-0 items-center gap-[5px] whitespace-nowrap border-r border-[#cccccc] pl-[5px] pt-px ${t.w}`}>
          {t.icon}
          {t.name}
        </button>
      ))}
      <button type="button" className="flex w-0 grow items-center gap-1 whitespace-nowrap border-r border-[#cccccc] pl-1.5 pt-px">{dashIcon}Dashb</button>
      <button type="button" aria-label="New worksheet" className="flex w-8 shrink-0 items-center justify-center border-r border-[#cccccc]">
        <Icon size={18} box="3 3 18 18"><path d="M17.500 11V5.500h-13v12H12" /><path d="M7.500 15v-3M10.500 15V9M13.500 13V8" /><path d="M12.500 17h8M16.500 13v8" stroke="#555555" strokeWidth="2" /></Icon>
      </button>
      <button type="button" aria-label="New dashboard" className="flex w-8 shrink-0 items-center justify-center border-r border-[#cccccc]">
        <Icon size={18} box="3 3 18 18"><path d="M17.500 11V5.500h-13v12H12M11 5.500v12M4.500 11.500h13" /><path d="M12.500 17h8M16.500 13v8" stroke="#555555" strokeWidth="2" /></Icon>
      </button>
      <button type="button" aria-label="New story" className="flex w-8 shrink-0 items-center justify-center">
        <Icon size={18} box="3 3 18 18"><path d="M16.500 11V4.500l-3 1.500h-5l-3-1.500v12l3 1.500 3.500-1.500M11 8v8.500" /><path d="M12.500 17h8M16.500 13v8" stroke="#555555" strokeWidth="2" /></Icon>
      </button>
    </nav>
  );
}

const pager = [
  { name: "First sheet", d: "M2.500 2.500h1v7h-1zM8.500 2.500v7L4.500 6z" },
  { name: "Previous sheet", d: "M7.500 2.500v7L4 6z" },
  { name: "Next sheet", d: "M4.500 2.500v7L8 6z" },
  { name: "Last sheet", d: "M8.500 2.500h1v7h-1zM3.500 2.500v7L7.500 6z" },
];

function StatusBar() {
  return (
    <footer className="flex h-[21px] shrink-0 items-center bg-[#ececec] text-[11px] text-[#111111]">
      <span className="ml-[3px] pt-px">10 marks</span>
      <span className="ml-[17px] pt-px">1 row by 1 column</span>
      <span className="ml-[17px] grow pt-px">SUM(Global Sales): 3,599</span>
      <div className="h-full w-[127px] border-l border-[#cccccc]" />
      <div className="h-full w-[27px] border-l border-[#cccccc]" />
      <div className="h-full w-[27px] border-l border-[#cccccc]" />
      <div className="h-full w-[47px] border-l border-[#cccccc]" />
      <div className="flex h-full w-[71px] items-center justify-center gap-1 border-l border-[#cccccc]">
        {pager.map((p) => (
          <button key={p.name} type="button" aria-label={p.name}>
            <svg width="12" height="12" viewBox="0 0 12 12" fill="#444444" aria-hidden="true"><path d={p.d} /></svg>
          </button>
        ))}
      </div>
      <div className="flex h-full w-[68px] items-center justify-center gap-[9px] border-l border-[#cccccc] pl-0.5">
        <svg width="12" height="12" viewBox="0 0 12 12" fill="#bbbbbb" aria-hidden="true"><path d="M0 0h3v3H0zM4 0h3v3H4zM8 0h3v3H8zM0 4h3v3H0zM4 4h3v3H4zM8 4h3v3H8zM0 8h3v3H0zM4 8h3v3H4zM8 8h3v3H8z" /></svg>
        <svg width="12" height="12" viewBox="0 0 12 12" fill="#bbbbbb" aria-hidden="true"><path d="M0 0h11v7H0zM0 8h3v3H0zM4 8h3v3H4zM8 8h3v3H8z" /></svg>
        <svg width="12" height="12" viewBox="0 0 12 12" fill="#666666" aria-hidden="true"><path d="M0 0h11v11H0z" /></svg>
      </div>
    </footer>
  );
}

/* ---------- taskbar ---------- */

const apps: { name: string; art: ReactNode; cls?: string }[] = [
  { name: "Cortana", art: <circle cx="12" cy="12" r="6.500" fill="none" stroke="#ffffff" strokeWidth="2" /> },
  { name: "Task view", art: <path d="M4.500 4v3h9V4M4.500 20v-3h9v3M4.500 9.500h9v5h-9zM17.500 4v16M17 8.500h2v3h-2z" fill="none" stroke="#ffffff" strokeWidth="1.200" /> },
  { name: "Edge", art: <path d="M2 11C2.500 5.500 6.500 2 12 2c6 0 10.200 4.300 10.200 9.800v2H9c.3 3 2.800 4.300 5.500 4.300 2.300 0 4.300-.6 6.100-1.700v4.200c-2 1.200-4.300 1.700-7 1.700C8 22.300 4.500 19 4.500 14c0-3.400 1.800-5.900 5-7.300C6 7 3.700 8.500 2 11zM9.200 10.500H16c0-2.500-1.200-3.700-3.300-3.700-2 0-3.200 1.500-3.500 3.700z" fill="#1b7fdc" /> },
  { name: "File Explorer", art: <><path d="M1.500 3h7l2 2.500H1.500z" fill="#d9a02c" /><path d="M1.500 5.500h21V21h-21z" fill="#fcd462" /><path d="M5.500 13h13v8.500H15V18H9v3.500H5.500z" fill="#3d93d9" /></> },
  { name: "Microsoft Store", art: <><path d="M8 6V4.500A2.500 2.500 0 0 1 10.500 2h3A2.500 2.500 0 0 1 16 4.500V6" fill="none" stroke="#ffffff" strokeWidth="1.300" /><path d="M.5 6h23v17H.5z" fill="#ffffff" /><path d="M6.500 9h5v5h-5z" fill="#f25022" /><path d="M12.500 9h5v5h-5z" fill="#7fba00" /><path d="M6.500 15h5v5h-5z" fill="#00a4ef" /><path d="M12.500 15h5v5h-5z" fill="#ffb900" /></> },
  { name: "Mail", art: <><path d="M0 9l12-7 12 7v13H0z" fill="#ffffff" /><path d="M1.500 9h21L12 15l3 4z" fill="#24221f" /></> },
  { name: "Photoshop", art: <><rect x="2" y="2" width="21" height="20" rx="4" fill="#001d34" /><text x="12.500" y="16.500" textAnchor="middle" fill="#31a8ff" className="font-['Open_Sans',sans-serif] text-[12px] font-bold">Ps</text></> },
  { name: "MySQL Workbench", art: <><rect x="0" y="0" width="24" height="24" rx="2" fill="#2a638f" /><path d="M2 4.500c4-2 8 0 10 4s3 6 8 8l-4 .5 3 4M3 5l6 11 2-3 3 5" fill="none" stroke="#d7e7f3" strokeWidth="1" /><path d="M16 5h6M18 9h4M15 8l3-4" stroke="#d7e7f3" /></> },
  { name: "Chrome", cls: "border-[#f5c3a2]", art: <><circle cx="12" cy="12" r="12" fill="#fbc116" /><path d="M12 12L1.600 6A12 12 0 0 1 22.400 6z" fill="#e33b2e" /><path d="M12 12L1.600 6A12 12 0 0 0 12 24l5.200-9z" fill="#2da94f" /><path d="M12 6h10.400A12 12 0 0 1 12 24l5.200-9z" fill="#fbc116" /><circle cx="12" cy="12" r="6" fill="#ffffff" /><circle cx="12" cy="12" r="4.600" fill="#3a7cec" /></> },
  { name: "Tableau", cls: "border-[#f5c3a2] bg-[#555350]", art: <><rect x="1" y="1" width="22" height="23" fill="#f5f5f5" /><g fill="none" strokeWidth="1.200"><path d="M12 8v8M8 12h8" stroke="#3c7597" strokeWidth="1.500" /><path d="M7 5v5M4.500 7.500h5M17 5v5M14.500 7.500h5M7 14v5M4.500 16.500h5M17 14v5M14.500 16.500h5" stroke="#6ea5c4" /><path d="M12 2.500v3.500M10 4h4M12 18v3.500M10 20h4M4 10v4M2.500 12h3M20 10v4M18.500 12h3" stroke="#8d9fb0" /></g></> },
];

function Taskbar() {
  return (
    <footer className="flex h-10 shrink-0 items-stretch bg-[#292622] font-['Open_Sans','Noto_Sans',sans-serif] text-[12px] font-normal text-white">
      <button type="button" aria-label="Start" className="flex w-12 shrink-0 items-center justify-center bg-[#272c24]">
        <svg width="16" height="16" viewBox="0 0 16 16" fill="#ffffff" aria-hidden="true"><path d="M0 2l7-1v6.500H0zM8 1l8-1v7.500H8zM0 8.500h7V15l-7-1zM8 8.500h8V16l-8-1z" /></svg>
      </button>
      <label className="flex w-[344px] shrink-0 items-center gap-[11px] border border-[#c0c0c0] bg-[#f2f2f2] pl-3 text-[14px]">
        <Icon size={16} box="0 0 16 16" color="#222222"><circle cx="10" cy="6" r="5" strokeWidth="1.300" /><path d="M6.500 9.500L1 15.500" strokeWidth="1.300" /></Icon>
        <input aria-label="Type here to search" placeholder="Type here to search" className="min-w-0 grow bg-transparent placeholder:text-[#333333] focus:outline-none" />
      </label>
      <div className="flex gap-1 pl-0.5">
        {apps.map((a) => (
          <button key={a.name} type="button" aria-label={a.name} className={`flex w-[45px] shrink-0 items-center justify-center border-b-2 ${a.cls ?? "border-transparent"}`}>
            <svg width="24" height="24" viewBox="0 0 24 24" aria-hidden="true">{a.art}</svg>
          </button>
        ))}
      </div>
      <div className="grow" />
      <div className="flex items-center gap-2">
        <Icon size={14} box="0 0 14 14" color="#ffffff"><path d="M1.500 10L7 4.500l5.500 5.500" strokeWidth="1.300" /></Icon>
        <Icon size={16} box="0 0 16 16" color="#ffffff"><path d="M1 4.500h12v7H1zM13.500 6.500h1.500v3h-1.500" strokeWidth="1.300" /><path d="M3 6h6v4H3z" fill="#ffffff" stroke="none" /></Icon>
        <Icon size={16} box="0 0 16 16" color="#dddddd"><path d="M2 14A12 12 0 0 1 14 3M5 14a9 9 0 0 1 9-8M8 14a6 6 0 0 1 6-5M11 14a3 3 0 0 1 3-2" /></Icon>
        <Icon size={18} box="0 0 18 18" color="#ffffff"><path d="M1 6.500h3l4-3.500v12l-4-3.500H1zM10.500 6.500c1 1.500 1 3.500 0 5M13 5c1.800 2.500 1.800 5.500 0 8M15.500 3.500c2.500 3.500 2.500 7.500 0 11" /></Icon>
        <span>ENG</span>
      </div>
      <div className="ml-3 flex flex-col items-center justify-center pb-px text-[11px] leading-[18px]">
        <span>13:07</span>
        <span>17-04-2023</span>
      </div>
      <button type="button" aria-label="Notifications" className="ml-[18px] mr-2.5 flex items-center">
        <svg width="26" height="30" viewBox="0 0 26 30" aria-hidden="true">
          <path d="M1 5h16v13H9l-4 4v-4H1z" fill="#ffffff" /><path d="M3.500 8.500h11M3.500 11.500h11M3.500 14.500h6" stroke="#292622" />
          <circle cx="16.500" cy="20.500" r="8" fill="#4a4845" stroke="#999999" />
          <text x="16.500" y="25" textAnchor="middle" fill="#ffffff" className="text-[12px]">1</text>
        </svg>
      </button>
      <div className="mr-1 w-px bg-[#77736d]" />
    </footer>
  );
}

export default function App() {
  return (
    <div className="flex h-screen flex-col overflow-hidden bg-[#f5f5f5] font-['Inter','Noto_Sans',sans-serif] font-light">
      <TitleBar />
      <Toolbar />
      <div className="relative flex min-h-0 grow">
        <DataPane />
        <Cards />
        <Sheet />
        <ShowMe />
      </div>
      <SheetTabs />
      <StatusBar />
      <Taskbar />
    </div>
  );
}
